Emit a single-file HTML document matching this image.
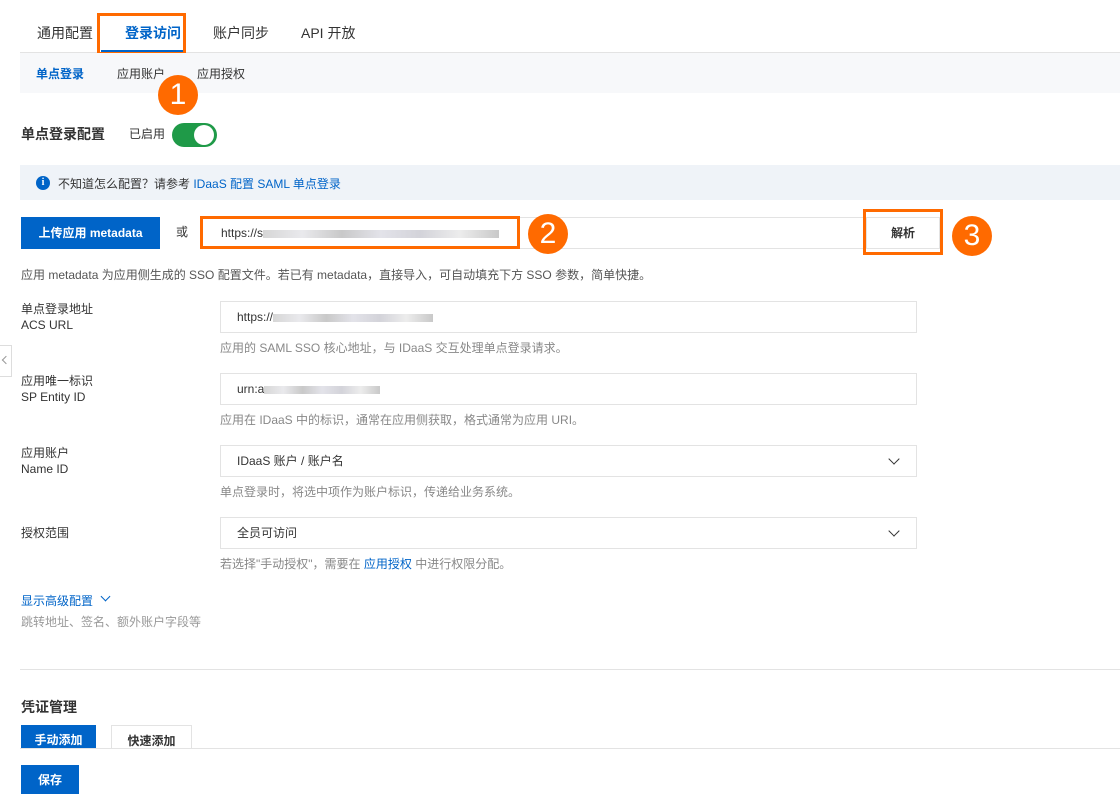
<!DOCTYPE html>
<html><head><meta charset="utf-8"><style>
*{margin:0;padding:0;box-sizing:border-box}
body{width:1120px;height:794px;background:#fff;font-family:"Liberation Sans","Noto Sans CJK SC",sans-serif;font-size:12px;color:#333;position:relative;overflow:hidden}
.a{position:absolute;white-space:nowrap}
.blue{color:#0064c8}
.inp{position:absolute;border:1px solid #e3e3e3;background:#fff;height:32px;padding-left:16px;line-height:30px;font-size:12px;color:#333}
.blur{display:inline-block;height:8px;vertical-align:middle;background:linear-gradient(90deg,#ccc,#e4e4e8,#bbb,#dcdce4,#c8c8d0,#e8e8e8,#bbb);opacity:.8}
.help{position:absolute;font-size:12px;color:#888}
.lab{position:absolute;left:21px;font-size:12px;color:#333;line-height:16px}
.circ{position:absolute;width:40px;height:40px;border-radius:50%;background:#ff6a00;color:#fff;font-size:30px;text-align:center;line-height:40px}
.obox{position:absolute;border:3px solid #ff6a00}
.btn{position:absolute;background:#0064c8;color:#fff;font-weight:bold;font-size:12px;text-align:center}
.chev{position:absolute;width:8px;height:8px;border-right:1.5px solid #333;border-bottom:1.5px solid #333;transform:rotate(45deg)}
</style></head><body>
<div class="a" style="left:37px;top:23px;font-size:14px;color:#333">通用配置</div>
<div class="a blue" style="left:125px;top:23px;font-size:14px;font-weight:bold">登录访问</div>
<div class="a" style="left:213px;top:23px;font-size:14px">账户同步</div>
<div class="a" style="left:301px;top:23px;font-size:14px">API 开放</div>
<div class="a" style="left:20px;top:52px;width:1100px;height:1px;background:#e3e3e3"></div>
<div class="a" style="left:101px;top:50px;width:84px;height:2px;background:#0064c8"></div>
<div class="obox" style="left:97px;top:13px;width:89px;height:42px"></div>
<div class="a" style="left:20px;top:53px;width:1100px;height:40px;background:#f7f8fa"></div>
<div class="a blue" style="left:36px;top:65px;font-weight:bold">单点登录</div>
<div class="a" style="left:117px;top:65px">应用账户</div>
<div class="a" style="left:197px;top:65px">应用授权</div>
<div class="circ" style="left:158px;top:75px">1</div>
<div class="a" style="left:21px;top:124px;font-size:14px;font-weight:bold">单点登录配置</div>
<div class="a" style="left:129px;top:125px">已启用</div>
<div class="a" style="left:172px;top:123px;width:45px;height:24px;border-radius:12px;background:#1f9a48"></div>
<div class="a" style="left:194px;top:125px;width:20px;height:20px;border-radius:50%;background:#fff"></div>
<div class="a" style="left:20px;top:165px;width:1100px;height:35px;background:#eff3f8"></div>
<div class="a" style="left:36px;top:176px;width:14px;height:14px;border-radius:50%;background:#0064c8;color:#fff;font-size:10px;font-weight:bold;text-align:center;line-height:14px;font-family:'Liberation Serif',serif">i</div>
<div class="a" style="left:58px;top:175px">不知道怎么配置？请参考 <span class="blue">IDaaS 配置 SAML 单点登录</span></div>
<div class="btn" style="left:21px;top:217px;width:139px;height:32px;line-height:32px">上传应用 metadata</div>
<div class="a" style="left:176px;top:223px">或</div>
<div class="inp" style="left:200px;top:217px;width:667px;padding-left:20px">https://s<span class="blur" style="width:236px"></span></div>
<div class="a" style="left:866px;top:217px;width:74px;height:32px;border:1px solid #e3e3e3;text-align:center;line-height:30px;font-weight:bold">解析</div>
<div class="obox" style="left:200px;top:216px;width:320px;height:33px"></div>
<div class="circ" style="left:528px;top:214px">2</div>
<div class="obox" style="left:863px;top:209px;width:80px;height:46px"></div>
<div class="circ" style="left:952px;top:216px">3</div>
<div class="help" style="left:21px;top:266px;color:#555">应用 metadata 为应用侧生成的 SSO 配置文件。若已有 metadata，直接导入，可自动填充下方 SSO 参数，简单快捷。</div>
<div class="lab" style="top:301px">单点登录地址<br>ACS URL</div>
<div class="inp" style="left:220px;top:301px;width:697px">https://<span class="blur" style="width:160px"></span></div>
<div class="help" style="left:220px;top:339px">应用的 SAML SSO 核心地址，与 IDaaS 交互处理单点登录请求。</div>
<div class="a" style="left:0;top:345px;width:12px;height:32px;border:1px solid #ddd;border-left:none;background:#fff"></div>
<div class="a" style="left:3px;top:357px;width:6px;height:6px;border-left:1.5px solid #999;border-bottom:1.5px solid #999;transform:rotate(45deg)"></div>
<div class="lab" style="top:373px">应用唯一标识<br>SP Entity ID</div>
<div class="inp" style="left:220px;top:373px;width:697px">urn:a<span class="blur" style="width:116px"></span></div>
<div class="help" style="left:220px;top:411px">应用在 IDaaS 中的标识，通常在应用侧获取，格式通常为应用 URI。</div>
<div class="lab" style="top:445px">应用账户<br>Name ID</div>
<div class="inp" style="left:220px;top:445px;width:697px">IDaaS 账户 / 账户名</div>
<div class="chev" style="left:890px;top:455px"></div>
<div class="help" style="left:220px;top:483px">单点登录时，将选中项作为账户标识，传递给业务系统。</div>
<div class="lab" style="top:525px">授权范围</div>
<div class="inp" style="left:220px;top:517px;width:697px">全员可访问</div>
<div class="chev" style="left:890px;top:527px"></div>
<div class="help" style="left:220px;top:555px">若选择"手动授权"，需要在 <span class="blue">应用授权</span> 中进行权限分配。</div>
<div class="a blue" style="left:21px;top:592px">显示高级配置</div>
<div class="a" style="left:102px;top:593px;width:7px;height:7px;border-right:1.5px solid #0064c8;border-bottom:1.5px solid #0064c8;transform:rotate(45deg)"></div>
<div class="help" style="left:21px;top:613px;color:#999">跳转地址、签名、额外账户字段等</div>
<div class="a" style="left:20px;top:669px;width:1100px;height:1px;background:#e3e3e3"></div>
<div class="a" style="left:21px;top:697px;font-size:14px;font-weight:bold">凭证管理</div>
<div class="btn" style="left:21px;top:725px;width:75px;height:23px;line-height:30px;overflow:hidden">手动添加</div>
<div class="a" style="left:111px;top:725px;width:81px;height:23px;border:1px solid #e3e3e3;border-bottom:none;text-align:center;line-height:30px;font-weight:bold;overflow:hidden">快速添加</div>
<div class="a" style="left:20px;top:748px;width:1100px;height:1px;background:#e3e3e3"></div>
<div class="btn" style="left:21px;top:765px;width:58px;height:29px;line-height:30px">保存</div>
</body></html>
